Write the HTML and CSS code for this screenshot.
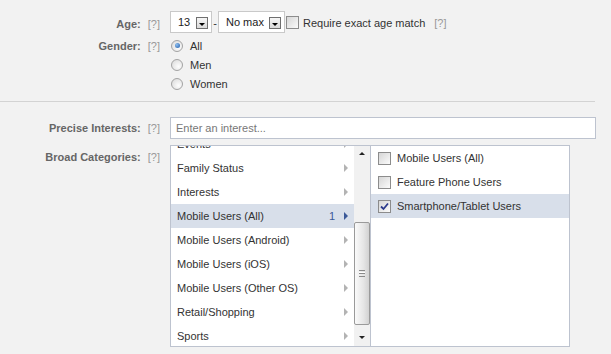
FILE: index.html
```html
<!DOCTYPE html>
<html lang="en">
<head>
    <meta charset="UTF-8">
    <title>Targeting</title>
    <link rel="stylesheet" href="styles.css">
</head>
<body>
    <div class="form">
        <div class="field field-age">
            <div class="label">Age: <span class="help">[?]</span></div>
            <div class="control age-control">
                <div class="select sel-min"><span>13</span><i class="drop"></i></div>
                <span class="dash">-</span>
                <div class="select sel-max"><span>No max</span><i class="drop"></i></div>
                <span class="check"></span>
                <span class="check-text">Require exact age match</span>
                <span class="help help-after">[?]</span>
            </div>
        </div>

        <div class="field field-gender">
            <div class="label">Gender: <span class="help">[?]</span></div>
            <div class="control radios">
                <label class="radio-row"><span class="radio on"></span>All</label>
                <label class="radio-row"><span class="radio"></span>Men</label>
                <label class="radio-row"><span class="radio"></span>Women</label>
            </div>
        </div>

        <div class="separator"></div>

        <div class="field field-precise">
            <div class="label">Precise Interests: <span class="help">[?]</span></div>
            <div class="control">
                <div class="text-input">Enter an interest...</div>
            </div>
        </div>

        <div class="field field-broad">
            <div class="label">Broad Categories: <span class="help">[?]</span></div>
            <div class="control">
                <div class="browser">
                    <div class="cats">
                        <ul class="cat-list">
                            <li>Events<i class="arrow"></i></li>
                            <li>Family Status<i class="arrow"></i></li>
                            <li>Interests<i class="arrow"></i></li>
                            <li class="selected">Mobile Users (All)<span class="count">1</span><i class="arrow"></i></li>
                            <li>Mobile Users (Android)<i class="arrow"></i></li>
                            <li>Mobile Users (iOS)<i class="arrow"></i></li>
                            <li>Mobile Users (Other OS)<i class="arrow"></i></li>
                            <li>Retail/Shopping<i class="arrow"></i></li>
                            <li>Sports<i class="arrow"></i></li>
                        </ul>
                    </div>
                    <div class="scrollbar">
                        <div class="sb-btn"><i class="sb-up"></i></div>
                        <div class="sb-track">
                            <div class="sb-thumb"><span class="grip"></span></div>
                        </div>
                        <div class="sb-btn"><i class="sb-down"></i></div>
                    </div>
                    <ul class="sub-list">
                        <li><span class="check"></span>Mobile Users (All)</li>
                        <li><span class="check"></span>Feature Phone Users</li>
                        <li class="selected">
                            <span class="check checked">
                                <svg width="9" height="9" viewBox="0 0 9 9"><path d="M1 4.5 L3.5 7 L8 1.5" fill="none" stroke="#2b3a8c" stroke-width="1.8"/></svg>
                            </span>Smartphone/Tablet Users
                        </li>
                    </ul>
                </div>
            </div>
        </div>
    </div>
</body>
</html>
```

FILE: styles.css
```css
body {
    margin: 0;
    background: #f2f2f2;
    font-family: "Liberation Sans", Arial, sans-serif;
    font-size: 11px;
    color: #333;
}
ul {
    margin: 0;
    padding: 0;
    list-style: none;
}
.form {
    padding-top: 11px;
}
.field {
    display: flex;
}
.label {
    width: 160px;
    flex-shrink: 0;
    text-align: right;
    font-weight: bold;
    color: #666;
    line-height: 14px;
}
.help {
    font-weight: normal;
    color: #999;
    margin-left: 4px;
}
.control {
    margin-left: 10px;
}

/* age */
.field-age .label {
    padding-top: 6px;
}
.age-control {
    display: flex;
    align-items: center;
    height: 22px;
}
.select {
    box-sizing: border-box;
    height: 22px;
    background: #fff;
    border: 1px solid #c9c9c9;
    display: flex;
    align-items: flex-end;
    justify-content: space-between;
    padding: 0 3px 2px 7px;
    line-height: 15px;
    color: #222;
}
.sel-min {
    width: 42px;
}
.sel-max {
    width: 67px;
    padding-left: 7px;
}
.drop {
    width: 12px;
    height: 12px;
    box-sizing: border-box;
    border: 1px solid #6f6f6f;
    background: linear-gradient(#f6f6f6, #d9d9d9);
    position: relative;
    margin-bottom: 1px;
}
.drop::after {
    content: "";
    position: absolute;
    left: 2px;
    top: 5px;
    border-left: 3px solid transparent;
    border-right: 3px solid transparent;
    border-top: 3px solid #000;
}
.dash {
    width: 6px;
    text-align: center;
    padding-top: 2px;
}
.check {
    display: inline-flex;
    align-items: center;
    justify-content: center;
    width: 13px;
    height: 13px;
    box-sizing: border-box;
    border: 1px solid #8c8c8c;
    background: linear-gradient(135deg, #d6d6d6, #fbfbfb);
    flex-shrink: 0;
}
.age-control .check {
    margin-left: 1px;
}
.check-text {
    margin-left: 4px;
    padding-top: 2px;
}
.help-after {
    margin-left: 9px;
    padding-top: 2px;
}

/* gender */
.field-gender {
    margin-top: 3px;
}
.field-gender .label {
    padding-top: 3px;
}
.radio-row {
    display: flex;
    align-items: center;
    height: 19px;
}
.radio {
    width: 12px;
    height: 12px;
    box-sizing: border-box;
    border-radius: 50%;
    border: 1px solid #a3a3a3;
    background: radial-gradient(circle at 65% 65%, #fdfdfd, #d8d8d8);
    margin: 0 7px 0 1px;
    display: flex;
    align-items: center;
    justify-content: center;
}
.radio.on::after {
    content: "";
    width: 5px;
    height: 5px;
    border-radius: 50%;
    background: radial-gradient(circle at 35% 35%, #8fc0f0, #1f5aa8);
}

.separator {
    margin-top: 8px;
    width: 595px;
    border-top: 1px solid #d3d3d3;
}

/* precise interests */
.field-precise {
    margin-top: 15px;
    align-items: center;
}
.text-input {
    box-sizing: border-box;
    width: 426px;
    height: 22px;
    background: #fff;
    border: 1px solid #bdc3cf;
    padding: 3px 5px;
    line-height: 14px;
    color: #777;
}

/* broad categories */
.field-broad {
    margin-top: 6px;
}
.field-broad .label {
    padding-top: 5px;
}
.browser {
    display: flex;
    width: 400px;
    height: 202px;
    box-sizing: border-box;
    border: 1px solid #bdc3cf;
    background: #fff;
}
.cats {
    width: 183px;
    overflow: hidden;
}
.cat-list {
    margin-top: -14px;
}
.cat-list li {
    display: flex;
    align-items: center;
    height: 24px;
    padding: 0 6px 0 6px;
}
.cat-list li.selected {
    background: #d8dfea;
}
.count {
    margin-left: auto;
    color: #3b5998;
    margin-right: 9px;
}
.arrow {
    margin-left: auto;
    border-top: 4px solid transparent;
    border-bottom: 4px solid transparent;
    border-left: 4px solid #b3b3b3;
}
.cat-list li.selected .arrow {
    margin-left: 0;
    border-left-color: #3b5998;
}
.scrollbar {
    width: 16px;
    display: flex;
    flex-direction: column;
    background: #f1f1f1;
    border-right: 1px solid #bdc3cf;
}
.sb-btn {
    height: 17px;
    display: flex;
    align-items: center;
    justify-content: center;
}
.sb-up {
    border-left: 3px solid transparent;
    border-right: 3px solid transparent;
    border-bottom: 3px solid #222;
    margin-bottom: 2px;
}
.sb-down {
    border-left: 3px solid transparent;
    border-right: 3px solid transparent;
    border-top: 3px solid #222;
}
.sb-track {
    flex: 1;
    padding-top: 59px;
}
.sb-thumb {
    box-sizing: border-box;
    height: 103px;
    border: 1px solid #9a9a9a;
    border-radius: 2px;
    background: linear-gradient(to right, #fafafa, #e6e6e6 60%, #d2d2d2);
    display: flex;
    align-items: center;
    justify-content: center;
}
.grip {
    width: 6px;
    height: 5px;
    border-top: 1px solid #8a8a8a;
    border-bottom: 1px solid #8a8a8a;
    background: linear-gradient(#fff 0 1px, #8a8a8a 1px 2px, transparent 2px) 0 1px / 100% 3px no-repeat;
}
.sub-list {
    flex: 1;
}
.sub-list li {
    display: flex;
    align-items: center;
    height: 24px;
    padding-left: 7px;
}
.sub-list li.selected {
    background: #d8dfea;
}
.sub-list .check {
    margin-right: 6px;
}
```
